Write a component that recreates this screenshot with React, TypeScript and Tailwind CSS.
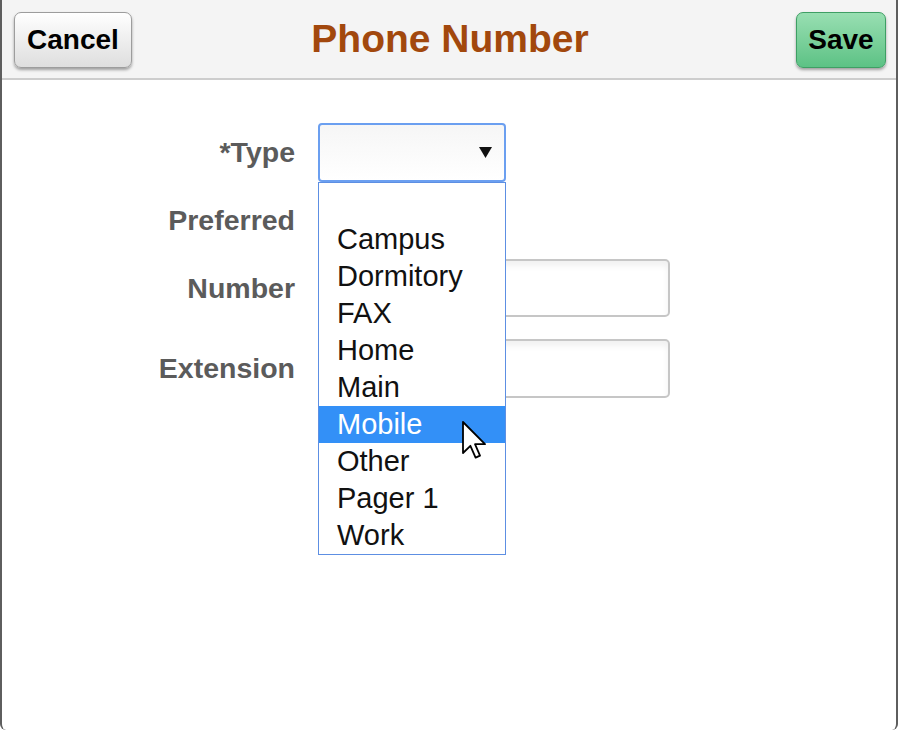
import React from 'react';

// Opciones del desplegable de tipo de teléfono.
const OPTIONS = ['', 'Campus', 'Dormitory', 'FAX', 'Home', 'Main', 'Mobile', 'Other', 'Pager 1', 'Work'];

function Cursor() {
  return (
    <svg
      className="absolute left-[144px] top-[298px]"
      width="24"
      height="38"
      viewBox="0 0 12 19"
    >
      <path
        d="M0.5 0.5 L0.5 16 L4.2 12.4 L6.8 18.3 L9 17.3 L6.5 11.6 L11.5 11.6 Z"
        fill="#fff"
        stroke="#000"
        strokeWidth="0.9"
        strokeLinejoin="round"
      />
    </svg>
  );
}

function Label({ children }: { children: React.ReactNode }) {
  return (
    <div className="flex items-center justify-end text-[28.5px] font-bold text-[#5b5b5b] leading-none">
      {children}
    </div>
  );
}

export default function App() {
  const selected = 'Mobile';

  return (
    <div className="w-[900px] h-[730px] bg-white font-['Liberation_Sans',Arial,sans-serif]">
      <div className="w-[898px] h-[730px] border-l-2 border-r-2 border-[#5e5e5e] rounded-b-[6px] flex flex-col">
        {/* Cabecera */}
        <div className="h-[80px] bg-[#f4f4f4] border-b-2 border-[#cdcdcd] grid grid-cols-[1fr_auto_1fr] items-center pl-[12px] pr-[10px] pt-[2px]">
          <div className="flex">
            <button
              type="button"
              className="w-[118px] h-[56px] rounded-[7px] border border-[#9d9d9d] bg-gradient-to-b from-white to-[#dedede] shadow-[0_2px_3px_rgba(0,0,0,0.35)] text-[28px] font-bold text-black leading-none"
            >
              Cancel
            </button>
          </div>
          <h1 className="text-[39px] font-bold text-[#a2480d] leading-none -mt-[4px]">Phone Number</h1>
          <div className="flex justify-end">
            <button
              type="button"
              className="w-[90px] h-[56px] rounded-[7px] border border-[#3e9f64] bg-gradient-to-b from-[#98dfb2] to-[#5cc285] shadow-[0_2px_3px_rgba(0,0,0,0.35)] text-[28px] font-bold text-black leading-none"
            >
              Save
            </button>
          </div>
        </div>

        {/* Formulario */}
        <div className="grid grid-cols-[293px_auto] gap-x-[23px] pt-[43px]">
          {/* Tipo */}
          <Label>*Type</Label>
          <div className="relative w-[188px] h-[59px] z-10">
            <div className="w-full h-full rounded-[4px] border-2 border-[#6b9ff0] bg-gradient-to-b from-[#f6f6f6] to-white flex items-center justify-end pr-[12px]">
              <svg width="13" height="11" viewBox="0 0 13 11">
                <path d="M0 0 H13 L6.5 11 Z" fill="#111" />
              </svg>
            </div>
            <div className="absolute left-0 top-full w-[188px] border border-[#5d8fe3] bg-white pt-[1px]">
              {OPTIONS.map((o) => (
                <div
                  key={o || 'blank'}
                  className={
                    'h-[37px] pl-[18px] flex items-center text-[29px] leading-none ' +
                    (o === selected ? 'bg-[#3390f7] text-white' : 'text-[#111]')
                  }
                >
                  {o}
                </div>
              ))}
            </div>
            <Cursor />
          </div>

          {/* Preferido */}
          <div className="h-[76px] flex items-center justify-end text-[28.5px] font-bold text-[#5b5b5b] leading-none">
            Preferred
          </div>
          <div className="h-[76px] flex items-center">
            <div className="w-[30px] h-[30px] border-2 border-[#bbb] rounded-[3px]" />
          </div>

          {/* Número */}
          <div className="h-[58px] mt-[1px] flex items-center justify-end text-[28.5px] font-bold text-[#5b5b5b] leading-none">
            Number
          </div>
          <input
            className="w-[352px] h-[58px] mt-[1px] rounded-[5px] border-2 border-[#c6c6c6] bg-white shadow-[inset_0_5px_6px_rgba(0,0,0,0.06)] outline-none"
            aria-label="Number"
          />

          {/* Extensión */}
          <div className="h-[59px] mt-[22px] flex items-center justify-end text-[28.5px] font-bold text-[#5b5b5b] leading-none">
            Extension
          </div>
          <input
            className="w-[352px] h-[59px] mt-[22px] rounded-[5px] border-2 border-[#c6c6c6] bg-white shadow-[inset_0_5px_6px_rgba(0,0,0,0.06)] outline-none"
            aria-label="Extension"
          />
        </div>
      </div>
    </div>
  );
}
